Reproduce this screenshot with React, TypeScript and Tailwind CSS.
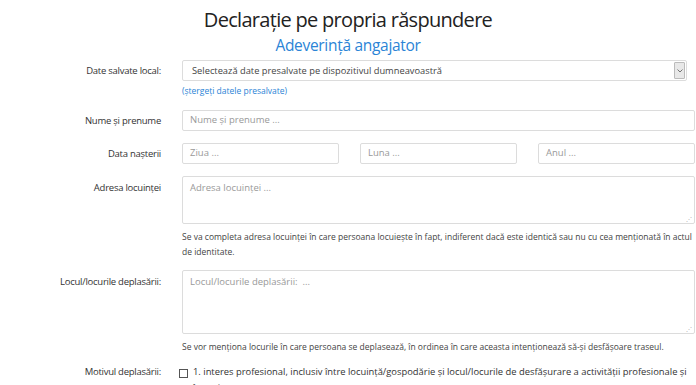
export default function App() {
  const font = { fontFamily: '"Open Sans", "Noto Sans", sans-serif' }
  const label = 'w-[162px] pr-[1px] text-right text-[9.5px] tracking-[-0.25px] text-[#333]'

  return (
    <div className="w-[696px] h-[385px] overflow-hidden bg-white text-[#333]" style={font}>
      {/* Header */}
      <div className="pt-[6px] text-center">
        <h1 className="text-[20px] leading-[28px] tracking-[-0.7px] text-[#222]">Declarație pe propria răspundere</h1>
        <h2 className="text-[15.5px] leading-[22px] tracking-[-0.3px] text-[#2b84d6]">Adeverință angajator</h2>
      </div>

      <div className="mt-[4px] flex flex-col">
        {/* Date salvate local */}
        <div className="flex">
          <label className={`${label} leading-[21px]`}>Date salvate local:</label>
          <div className="ml-[20px] flex-1">
            <div className="h-[21px] w-[505px] flex items-center justify-between rounded-[2px] border border-[#dcdcdc] pl-[9px] pr-[1px]">
              <span className="text-[9.3px] text-[#444]">Selectează date presalvate pe dispozitivul dumneavoastră</span>
              <span className="flex h-[17px] w-[11px] items-center justify-center rounded-[1px] border border-[#bbb] bg-[#e8e8e8]">
                <svg width="6" height="4" viewBox="0 0 6 4">
                  <path d="M0.5 0.5 L3 3 L5.5 0.5" stroke="#666" strokeWidth="0.9" fill="none" />
                </svg>
              </span>
            </div>
            <div className="mt-[4px] text-[8.5px] leading-[12px] text-[#2b84d6]">(ștergeți datele presalvate)</div>
          </div>
        </div>

        {/* Nume */}
        <div className="mt-[13px] flex">
          <label className={`${label} leading-[21px]`}>Nume și prenume</label>
          <div className="ml-[20px] h-[21px] w-[513px] flex items-center rounded-[2px] border border-[#dcdcdc] pl-[7px] text-[9.5px] text-[#999]">
            Nume și prenume ...
          </div>
        </div>

        {/* Data nasterii */}
        <div className="mt-[12px] flex">
          <label className={`${label} leading-[21px]`}>Data nașterii</label>
          <div className="ml-[20px] grid w-[513px] grid-cols-3 gap-[21px]">
            {['Ziua ...', 'Luna ...', 'Anul ...'].map((p) => (
              <div key={p} className="h-[21px] flex items-center rounded-[2px] border border-[#dcdcdc] pl-[7px] text-[9.5px] text-[#999]">
                {p}
              </div>
            ))}
          </div>
        </div>

        {/* Adresa */}
        <div className="mt-[12px] flex">
          <label className={`${label} pt-[1px] leading-[21px]`}>Adresa locuinței</label>
          <div className="ml-[20px] w-[514px]">
            <div className="relative h-[48px] w-[513px] rounded-[2px] border border-[#dcdcdc] pl-[7px] pt-[4px] text-[9.5px] text-[#999]">
              Adresa locuinței ...
              <span className="absolute bottom-[1px] right-[2px] text-[6px] leading-none text-[#aaa]">⋰</span>
            </div>
            <p className="mt-[5px] text-[8.5px] leading-[15px] text-[#444]">
              Se va completa adresa locuinței în care persoana locuiește în fapt, indiferent dacă este identică sau nu cu cea menționată în actul de identitate.
            </p>
          </div>
        </div>

        {/* Locul */}
        <div className="mt-[11px] flex">
          <label className={`${label} pt-[1px] leading-[21px]`}>Locul/locurile deplasării:</label>
          <div className="ml-[20px] w-[514px]">
            <div className="relative h-[64px] w-[513px] rounded-[2px] border border-[#dcdcdc] pl-[7px] pt-[4px] text-[9.5px] text-[#999]">
              Locul/locurile deplasării: &nbsp;...
              <span className="absolute bottom-[1px] right-[2px] text-[6px] leading-none text-[#aaa]">⋰</span>
            </div>
            <p className="mt-[5px] text-[8.5px] leading-[15px] text-[#444]">
              Se vor menționa locurile în care persoana se deplasează, în ordinea în care aceasta intenționează să-și desfășoare traseul.
            </p>
          </div>
        </div>

        {/* Motivul */}
        <div className="mt-[10px] flex">
          <label className={`${label} leading-[16px]`}>Motivul deplasării:</label>
          <div className="ml-[17px] flex w-[515px] items-start gap-[5px]">
            <span className="mt-[5px] h-[9px] w-[9px] shrink-0 border border-[#555] bg-white" />
            <span className="text-[9.4px] leading-[16px] text-[#333]">
              1. interes profesional, inclusiv între locuință/gospodărie și locul/locurile de desfășurare a activității profesionale și înapoi;
            </span>
          </div>
        </div>
      </div>
    </div>
  )
}
